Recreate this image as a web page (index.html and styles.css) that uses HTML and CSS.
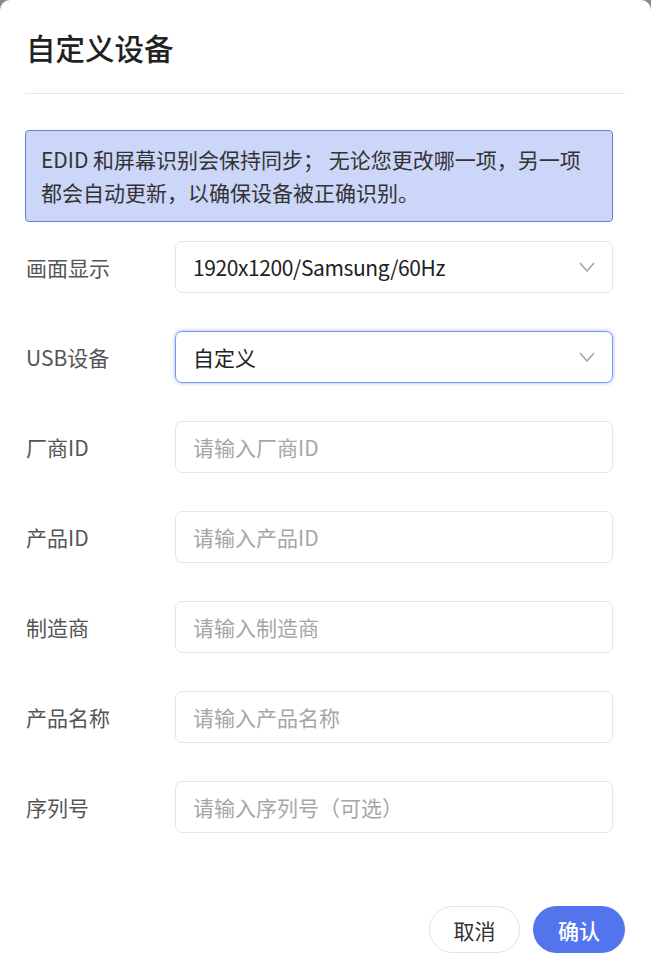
FILE: index.html
```html
<!DOCTYPE html>
<html lang="zh-CN">
<head>
<meta charset="utf-8">
<title>自定义设备</title>
<link rel="stylesheet" href="styles.css">
</head>
<body>
<div class="modal">
  <div class="header"><h1 class="title">自定义设备</h1></div>
  <div class="notice">EDID 和屏幕识别会保持同步； 无论您更改哪一项，另一项都会自动更新，以确保设备被正确识别。</div>
  <div class="form">
    <div class="row">
      <label class="label">画面显示</label>
      <div class="field select"><span class="value latin">1920x1200/Samsung/60Hz</span>
        <svg class="chev" width="16" height="10" viewBox="0 0 16 10"><path d="M1 1 L8 9 L15 1" fill="none" stroke="#9a9a9a" stroke-width="1.2"/></svg>
      </div>
    </div>
    <div class="row">
      <label class="label">USB设备</label>
      <div class="field select focused"><span class="value">自定义</span>
        <svg class="chev" width="16" height="10" viewBox="0 0 16 10"><path d="M1 1 L8 9 L15 1" fill="none" stroke="#9a9a9a" stroke-width="1.2"/></svg>
      </div>
    </div>
    <div class="row">
      <label class="label">厂商ID</label>
      <div class="field"><span class="placeholder">请输入厂商ID</span></div>
    </div>
    <div class="row">
      <label class="label">产品ID</label>
      <div class="field"><span class="placeholder">请输入产品ID</span></div>
    </div>
    <div class="row">
      <label class="label">制造商</label>
      <div class="field"><span class="placeholder">请输入制造商</span></div>
    </div>
    <div class="row">
      <label class="label">产品名称</label>
      <div class="field"><span class="placeholder">请输入产品名称</span></div>
    </div>
    <div class="row">
      <label class="label">序列号</label>
      <div class="field"><span class="placeholder">请输入序列号（可选）</span></div>
    </div>
  </div>
  <div class="footer">
    <button class="btn btn-cancel">取消</button>
    <button class="btn btn-ok">确认</button>
  </div>
</div>
</body>
</html>
```
FILE: styles.css
```css
html, body {
  margin: 0;
  padding: 0;
  background: #8c8c8c;
}
body {
  font-family: "Noto Sans CJK SC", "Noto Sans", sans-serif;
  font-size: 21px;
  color: #333;
}
.modal {
  background: #fff;
  min-height: 979px;
  box-sizing: border-box;
  border-radius: 10px 10px 0 0;
  padding: 0 26px 0 25px;
}
.header {
  height: 94px;
  box-sizing: border-box;
  border-bottom: 1px solid #e8e8e8;
  display: flex;
  align-items: center;
}
.title {
  margin: 0;
  font-size: 29.5px;
  font-weight: 500;
  color: #222;
  line-height: 40px;
  padding-left: 1px;
}
.notice {
  margin: 36px 12px 0 0;
  background: #ccd6f9;
  border: 1px solid #5d7fe9;
  border-radius: 4px;
  padding: 12px 15px;
  line-height: 33px;
  color: #333;
}
.form {
  margin: 19px 12px 0 0;
  display: flex;
  flex-direction: column;
  gap: 38px;
}
.row {
  display: flex;
  align-items: center;
}
.label {
  width: 150px;
  box-sizing: border-box;
  flex: none;
  color: #555;
  padding-left: 1px;
}
.field {
  flex: 1;
  height: 52px;
  box-sizing: border-box;
  border: 1px solid #e6e6e6;
  border-radius: 7px;
  padding: 0 17px;
  display: flex;
  align-items: center;
  justify-content: space-between;
}
.field.focused {
  border-color: #7e95f3;
  box-shadow: 0 0 3px 1px rgba(82, 117, 238, 0.35);
}
.value {
  color: #222;
}
.latin {
  letter-spacing: -0.4px;
}
.placeholder {
  color: #a6a6a6;
}
.chev {
  display: block;
}
.footer {
  margin-top: 73px;
  display: flex;
  justify-content: flex-end;
  gap: 13px;
}
.btn {
  height: 47px;
  border-radius: 24px;
  font-family: inherit;
  font-size: 21px;
  padding: 0;
  cursor: pointer;
}
.btn-cancel {
  width: 91px;
  background: #fff;
  border: 1px solid #e2e2e2;
  color: #333;
}
.btn-ok {
  width: 92px;
  background: #5275ee;
  border: none;
  color: #fff;
  font-weight: 500;
}
```
